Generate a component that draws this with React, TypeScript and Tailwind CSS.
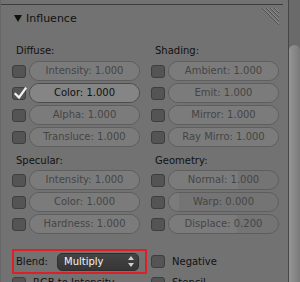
import React from "react";

function Check({ checked = false }: { checked?: boolean }) {
  return (
    <div className="relative w-[14px] h-[13px] shrink-0 rounded-[3px] bg-[#545454] border border-[#3e3e3e]">
      {checked && (
        <svg className="absolute left-[0px] top-[-2px]" width="15" height="15" viewBox="0 0 15 15">
          <path d="M2.5 8 L6 11.5 L12.5 2.5" fill="none" stroke="#f2f2f2" strokeWidth="2.2" strokeLinecap="square" />
        </svg>
      )}
    </div>
  );
}

function Slider({ label, active = false, fill = 100 }: { label: string; active?: boolean; fill?: number }) {
  return (
    <div
      className={
        "relative flex-1 h-[20px] rounded-full overflow-hidden border flex items-center justify-center " +
        (active ? "bg-[#7e7e7e] border-[#4c4c4c]" : "bg-[#747474] border-[#5e5e5e]")
      }
    >
      <div
        className={"absolute left-0 top-0 bottom-0 " + (active ? "bg-[#858585]" : "bg-[#7b7b7b]")}
        style={{ width: fill + "%" }}
      />
      <span className={"relative text-[10px] leading-none " + (active ? "text-[#111]" : "text-[#454545]")}>{label}</span>
    </div>
  );
}

function Row({ label, checked = false, active = false, fill = 100 }: { label: string; checked?: boolean; active?: boolean; fill?: number }) {
  return (
    <div className="flex items-center gap-[3px] h-[20px]">
      <Check checked={checked} />
      <Slider label={label} active={active} fill={fill} />
    </div>
  );
}

function Label({ text }: { text: string }) {
  return <div className="h-[20px] flex items-center pl-[4px] text-[10px] text-[#111]">{text}</div>;
}

function Toggle({ label }: { label: string }) {
  return (
    <div className="flex items-center gap-[7px] h-[20px]">
      <Check />
      <span className="text-[10px] text-[#111] leading-none">{label}</span>
    </div>
  );
}

export default function App() {
  return (
    <div className="w-[300px] h-[282px] overflow-hidden flex bg-[#727272] font-['DejaVu_Sans',sans-serif]">
      <div className="w-[288px] h-full shrink-0 flex flex-col border-l border-[#666666]">
        <div className="h-[4px] shrink-0" />
        <div className="mr-[5px] h-[1px] bg-[#3c3c3c] shrink-0" />
        {/* header */}
        <div className="h-[26px] shrink-0 flex items-center pl-[13px] pr-[8px]">
          <svg width="8" height="8" viewBox="0 0 8 8" className="shrink-0">
            <polygon points="0,1 8,1 4,8" fill="#111" />
          </svg>
          <span className="ml-[4px] text-[11px] text-[#111] leading-none">Influence</span>
          <svg width="18" height="18" viewBox="0 0 18 18" className="ml-auto self-start mt-[3px]">
            <g strokeWidth="1">
              <line x1="0" y1="0" x2="17" y2="17" stroke="#505050" />
              <line x1="1" y1="0" x2="17" y2="16" stroke="#8c8c8c" />
              <line x1="4" y1="0" x2="17" y2="13" stroke="#505050" />
              <line x1="5" y1="0" x2="17" y2="12" stroke="#8c8c8c" />
              <line x1="8" y1="0" x2="17" y2="9" stroke="#505050" />
              <line x1="9" y1="0" x2="17" y2="8" stroke="#8c8c8c" />
              <line x1="12" y1="0" x2="17" y2="5" stroke="#505050" />
              <line x1="13" y1="0" x2="17" y2="4" stroke="#8c8c8c" />
            </g>
          </svg>
        </div>

        <div className="pl-[11px]">
          {/* Diffuse / Shading */}
          <div className="mt-[9px] grid grid-cols-[128px_128px] gap-x-[11px]">
            <Label text="Diffuse:" />
            <Label text="Shading:" />
          </div>
          <div className="mt-[1px] grid grid-cols-[128px_128px] gap-x-[11px] gap-y-[2px]">
            <Row label="Intensity: 1.000" />
            <Row label="Ambient: 1.000" />
            <Row label="Color: 1.000" checked active />
            <Row label="Emit: 1.000" />
            <Row label="Alpha: 1.000" />
            <Row label="Mirror: 1.000" />
            <Row label="Transluce: 1.000" />
            <Row label="Ray Mirro: 1.000" />
          </div>

          {/* Specular / Geometry */}
          <div className="mt-[3px] grid grid-cols-[128px_128px] gap-x-[11px]">
            <Label text="Specular:" />
            <Label text="Geometry:" />
          </div>
          <div className="grid grid-cols-[128px_128px] gap-x-[11px] gap-y-[2px]">
            <Row label="Intensity: 1.000" />
            <Row label="Normal: 1.000" fill={63} />
            <Row label="Color: 1.000" />
            <Row label="Warp: 0.000" fill={9} />
            <Row label="Hardness: 1.000" />
            <Row label="Displace: 0.200" fill={62} />
          </div>

          {/* Blend */}
          <div className="mt-[15px] flex items-center">
            <div className="w-[135px] h-[25px] shrink-0 border-2 border-[#dc2028] flex items-center pl-[2px] pr-[6px]">
              <span className="text-[10px] text-[#111] leading-none">Blend:</span>
              <div className="ml-auto w-[82px] h-[18px] rounded-[5px] bg-gradient-to-b from-[#444444] to-[#363636] border border-[#2e2e2e] flex items-center pl-[6px] pr-[4px]">
                <span className="text-[10px] text-[#f4f4f4] leading-none">Multiply</span>
                <svg className="ml-auto" width="6" height="11" viewBox="0 0 6 11">
                  <polygon points="3,0 6,4 0,4" fill="#d0d0d0" />
                  <polygon points="0,7 6,7 3,11" fill="#d0d0d0" />
                </svg>
              </div>
            </div>
            <div className="ml-[4px]">
              <Toggle label="Negative" />
            </div>
          </div>
          <div className="mt-[-1px] grid grid-cols-[128px_128px] gap-x-[11px]">
            <Toggle label="RGB to Intensity" />
            <Toggle label="Stencil" />
          </div>
        </div>
      </div>
      {/* scrollbar */}
      <div className="w-[12px] h-full shrink-0 border-l border-[#464646] bg-[#6a6a6a] flex flex-col">
        <div className="mt-[45px] flex-1 rounded-t-[6px] bg-gradient-to-r from-[#959595] to-[#7a7a7a]" />
      </div>
    </div>
  );
}
